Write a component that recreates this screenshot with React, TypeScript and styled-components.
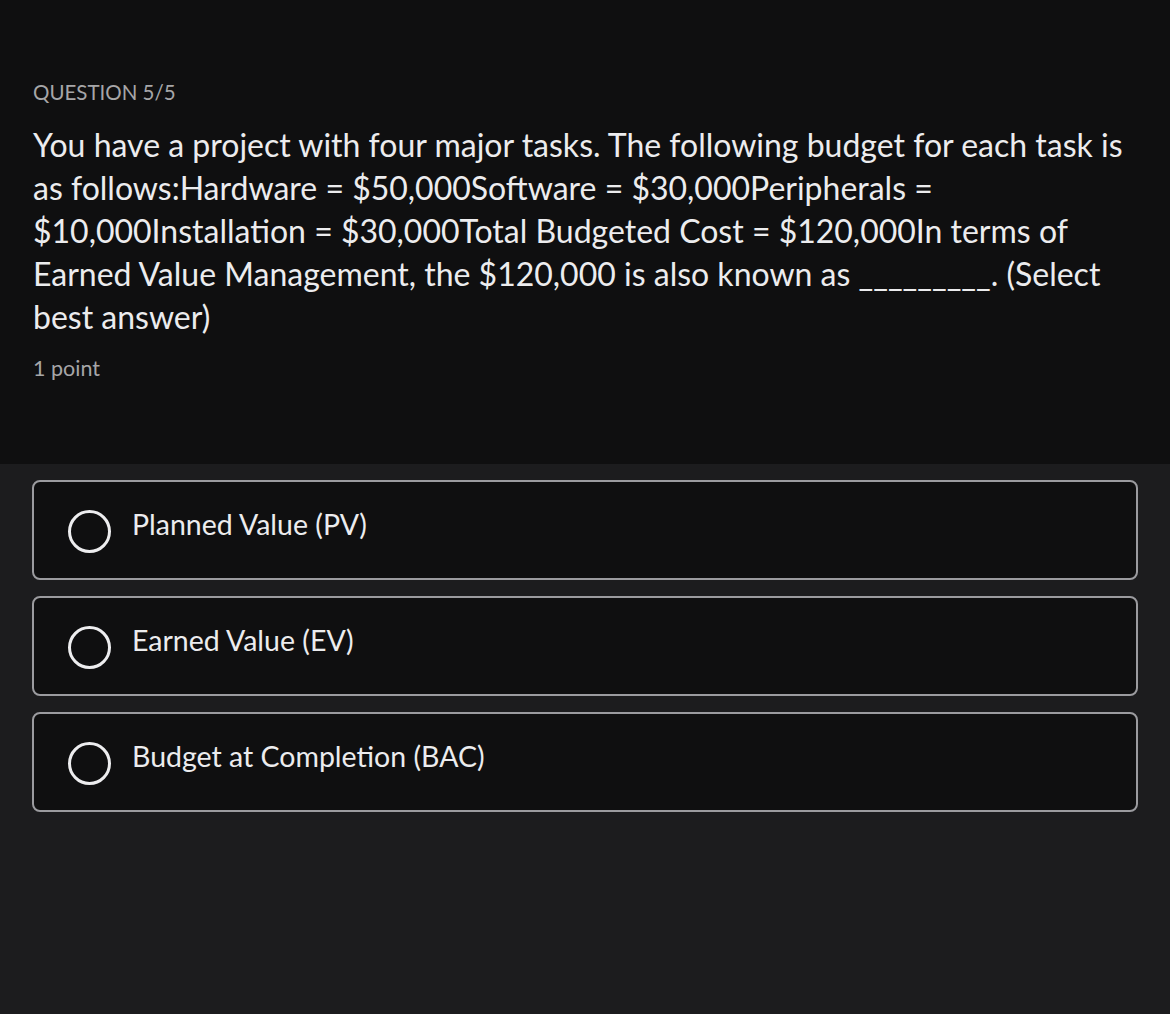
import { createGlobalStyle } from "styled-components";
import styled from "styled-components";

const GlobalStyle = createGlobalStyle`
  html, body {
    margin: 0;
    padding: 0;
    background: #1c1c1e;
  }
  body {
    font-family: Lato, "Noto Sans", "Liberation Sans", sans-serif;
    -webkit-font-smoothing: antialiased;
  }
`;

const Page = styled.div`
  width: 1170px;
  min-height: 1014px;
  background: #1c1c1e;
`;

const Header = styled.section`
  background: #0f0f10;
  height: 464px;
  box-sizing: border-box;
  padding: 78px 33px 0 33px;
`;

const Label = styled.div`
  color: #a6a6a8;
  font-size: 20.5px;
  line-height: 28px;
`;

const Prompt = styled.p`
  margin: 17px 0 0 0;
  color: #ececee;
  font-size: 32px;
  line-height: 43px;
  white-space: nowrap;
`;

const Points = styled.div`
  margin-top: 17px;
  color: #a6a6a8;
  font-size: 21.5px;
  line-height: 26px;
`;

const Options = styled.div`
  display: flex;
  flex-direction: column;
  gap: 16px;
  padding: 16px 32px 0 32px;
`;

const Option = styled.label`
  display: flex;
  align-items: center;
  height: 100px;
  box-sizing: border-box;
  background: #0f0f10;
  border: 2px solid #9b9b9f;
  border-radius: 8px;
  padding: 0 0 0 34px;
  gap: 21px;
  cursor: pointer;
`;

const Radio = styled.span`
  width: 43px;
  height: 43px;
  box-sizing: border-box;
  border: 3px solid #ededef;
  border-radius: 50%;
  flex: none;
  margin-top: 2px;
`;

const OptionText = styled.span`
  color: #ececee;
  font-size: 28.5px;
  line-height: 34px;
  margin-top: -12px;
`;

const choices = ["Planned Value (PV)", "Earned Value (EV)", "Budget at Completion (BAC)"];

export default function App() {
  return (
    <Page>
      <GlobalStyle />
      <Header>
        <Label>QUESTION 5/5</Label>
        <Prompt>
          You have a project with four major tasks. The following budget for each task is
          <br />
          as follows:Hardware = $50,000Software = $30,000Peripherals =
          <br />
          $10,000Installation = $30,000Total Budgeted Cost = $120,000In terms of
          <br />
          Earned Value Management, the $120,000 is also known as _________. (Select
          <br />
          best answer)
        </Prompt>
        <Points>1 point</Points>
      </Header>
      <Options>
        {choices.map((c) => (
          <Option key={c}>
            <Radio />
            <OptionText>{c}</OptionText>
          </Option>
        ))}
      </Options>
    </Page>
  );
}
